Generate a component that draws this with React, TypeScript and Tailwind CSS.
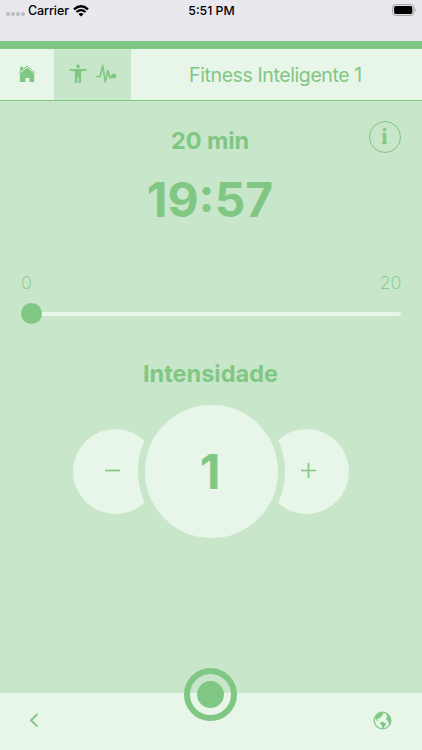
import { useState } from 'react';

function StatusBar() {
  return (
    <div className="flex h-[41px] items-start justify-between bg-[#e9e8ee] pl-[6px] pr-[5px] text-[13px] font-medium leading-[21px] text-black">
      <div className="flex w-[130px] items-center">
        <div className="mt-[7px] flex gap-[1px]">
          {[0, 1, 2, 3].map((dot) => (
            <span key={dot} className="h-[4px] w-[4px] rounded-full bg-[#bcbbc0]" />
          ))}
        </div>
        <span className="ml-[3px] text-[12.5px] tracking-[-0.1px]">Carrier</span>
        <svg className="ml-[4px]" width="16" height="12" viewBox="0 0 16 12" fill="none" stroke="black">
          <path d="M1 4.3Q8-1.9 15 4.3" strokeWidth="2.3" />
          <path d="M3.4 7Q8 3.1 12.6 7" strokeWidth="2.1" />
          <path d="M5.4 9Q8 7 10.6 9L8 11.6Z" fill="black" stroke="none" />
        </svg>
      </div>
      <span className="text-[12.3px]">5:51 PM</span>
      <div className="flex w-[130px] justify-end pt-[4px]">
        <svg width="25" height="12" viewBox="0 0 25 12">
          <rect x="0.6" y="0.6" width="21.2" height="10.8" rx="3" fill="none" stroke="#a09fa4" />
          <rect x="2.1" y="2.1" width="18.2" height="7.8" rx="1.6" fill="black" />
          <path d="M23.2 4Q24.8 6 23.2 8Z" fill="#a09fa4" />
        </svg>
      </div>
    </div>
  );
}

function HomeIcon() {
  return (
    <svg width="18" height="18" viewBox="0 0 18 18" fill="#81c784">
      <path d="M2.2 1.8h2.8v2.4L2.2 6.6Z" />
      <path d="M.8 7.8 9 1l8.2 6.8" fill="none" stroke="#81c784" strokeWidth="1" />
      <path d="M9 2.6 16.2 8.4V17h-4.8v-4H7.4v4H1.8V8.4Z" />
    </svg>
  );
}

function BodyIcon() {
  return (
    <svg width="18" height="20" viewBox="0 0 18 20" fill="#81c784">
      <circle cx="9" cy="2.3" r="1.9" />
      <path d="M.6 5h16.8v1.8L12.1 7.3V19H9.6v-6H8.4v6H5.9V7.3L.6 6.8Z" />
    </svg>
  );
}

function PulseIcon() {
  return (
    <svg width="21" height="20" viewBox="0 0 21 20" fill="none" stroke="#81c784" strokeWidth="1.7" strokeLinejoin="round" strokeLinecap="round">
      <path d="M1 12.5h3.1L6.7 1.4l2.6 16.4L11.9 6.5l2.2 7.7 1.5-2.2h2" />
      <circle cx="18" cy="12" r="2.4" fill="#81c784" stroke="none" />
    </svg>
  );
}

function GlobeIcon() {
  return (
    <svg width="19" height="19" viewBox="0 0 19 19">
      <circle cx="9.5" cy="9.5" r="8.3" fill="none" stroke="#81c784" strokeWidth="1.3" />
      <g fill="#81c784">
        <path d="M3.2 4.4 5.8 2 10 1.5l.5 1.3-1.3.5.7 1.2-1.8.8-.7 1.3-1.6.4-.2 1.4-1.3-.8-.5 1.2 2 .9-.6.6-2-1.2L2.2 7Z" />
        <path d="m7.3 11 2.7-.2 1.3 1 1.8.7-.5 1.9-1.1.9-1 2.3-1.2-.2-.2-2.6-1.6-1.7Z" />
        <path d="m13.3 3 2 .8 2 3.2.3 3.6-1.1 2-1.1-.4-.2-2.2-1.7-.8-.4-2 1.5-1.7-1.2-.8Z" />
      </g>
    </svg>
  );
}

export default function App() {
  const [intensity, setIntensity] = useState(1);

  return (
    <div className="flex h-[750px] w-[422px] flex-col overflow-hidden bg-[#c8e6c9] font-['Inter',sans-serif] text-[#81c784]">
      <StatusBar />

      <header className="flex h-[60px] border-b border-t-8 border-[#81c784] bg-[#e8f5e9]">
        <button className="flex w-[54px] items-center justify-center pb-[2px]">
          <HomeIcon />
        </button>
        <div className="flex w-[77px] items-center gap-[9px] bg-[#c8e6c9] pb-[2px] pl-[15px]">
          <BodyIcon />
          <PulseIcon />
        </div>
        <h1 className="flex-1 pr-[2px] pt-px text-center text-[19.5px] leading-[51px] tracking-[-0.4px]">
          Fitness Inteligente 1
        </h1>
      </header>

      <main className="flex-1">
        <section className="grid h-[159px] grid-cols-[1fr_auto_1fr] px-[21px] pt-[20px]">
          <div />
          <div className="pr-[2px] text-center">
            <p className="mt-[4px] text-[23.5px] font-bold leading-[32px] tracking-[-0.1px]">20 min</p>
            <p className="mt-[13px] text-[48px] font-bold leading-[60px]">19:57</p>
          </div>
          <button className="h-[32px] w-[32px] justify-self-end rounded-full border-[1.5px] border-[#81c784] pr-px font-['Liberation_Serif',serif] text-[22.5px] font-bold leading-[28px]">
            i
          </button>
        </section>

        <section className="px-[21px]">
          <div className="flex h-[43px] items-center justify-between pt-[2px] text-[18px] font-extralight">
            <span>0</span>
            <span className="tracking-[-0.3px]">20</span>
          </div>
          <div className="flex h-[21px] items-center">
            <div className="h-[21px] w-[21px] rounded-full bg-[#81c784]" />
            <div className="h-[4px] flex-1 rounded-r-full bg-[#e8f5e9]" />
          </div>
        </section>

        <section className="pt-[34px]">
          <h2 className="pr-px text-center text-[23.5px] font-bold leading-[32px]">Intensidade</h2>
          <div className="mt-[8px] flex items-center justify-center">
            <button
              className="flex h-[85px] w-[85px] items-center rounded-full bg-[#e8f5e9] pl-[32px]"
              onClick={() => setIntensity(Math.max(0, intensity - 1))}
            >
              <svg width="15" height="15" viewBox="0 0 15 15" stroke="#81c784" strokeWidth="1.7">
                <path d="M0 6.5h15" />
              </svg>
            </button>
            <div className="z-10 -mx-[20.5px] flex h-[147px] w-[147px] items-center justify-center rounded-full border-7 border-[#c8e6c9] bg-[#e8f5e9] pr-[2px] text-[48px] font-bold">
              {intensity}
            </div>
            <button
              className="flex h-[85px] w-[85px] items-center rounded-full bg-[#e8f5e9] pl-[37px]"
              onClick={() => setIntensity(intensity + 1)}
            >
              <svg className="overflow-visible" width="15" height="15" viewBox="0 0 15 15" stroke="#81c784" strokeWidth="1.7">
                <path d="M0 6.5h15M7.5 -1v15" />
              </svg>
            </button>
          </div>
        </section>
      </main>

      <footer className="relative flex h-[57px] items-center justify-between bg-[#e8f5e9] pb-[2px] pl-[29px] pr-[30px]">
        <svg width="10" height="15" viewBox="0 0 10 15" fill="none" stroke="#81c784" strokeWidth="1.9">
          <path d="M8.5 1 2 7.3l6.5 6.3" />
        </svg>
        {/* record button sits on the edge of the bar */}
        <button className="absolute -top-[25px] left-[184px] flex h-[53px] w-[53px] items-center justify-center rounded-full border-6 border-[#81c784]">
          <span className="h-[27px] w-[27px] rounded-full bg-[#81c784]" />
        </button>
        <GlobeIcon />
      </footer>
    </div>
  );
}
